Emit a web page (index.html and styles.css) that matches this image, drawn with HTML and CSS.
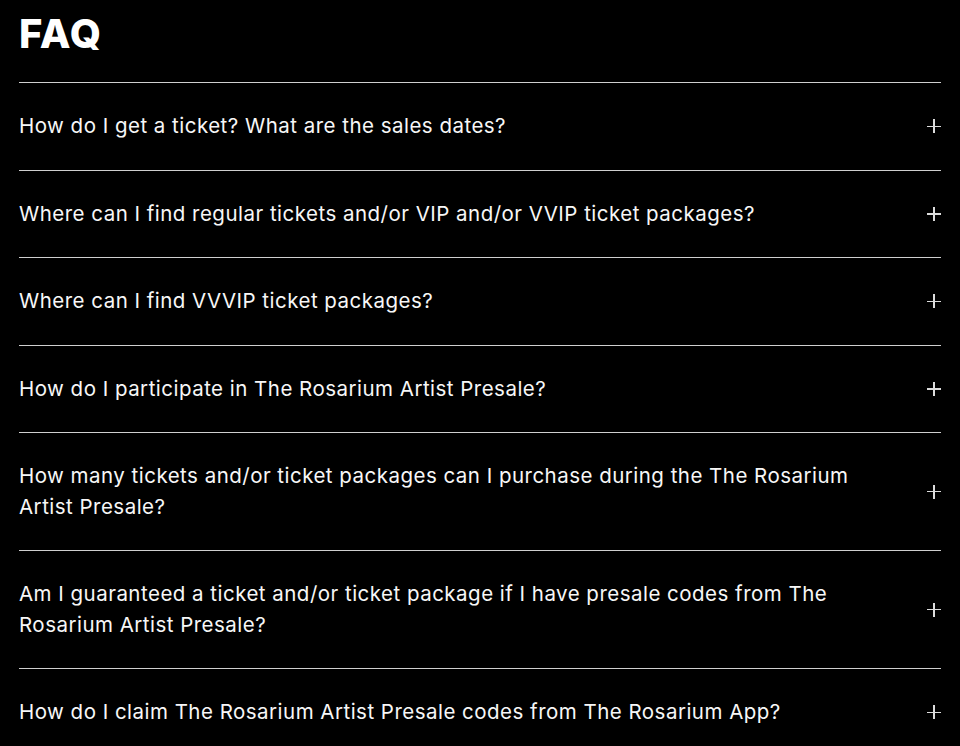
FILE: index.html
```html
<!DOCTYPE html>
<html lang="en">
<head>
<meta charset="utf-8">
<title>FAQ</title>
<link rel="stylesheet" href="styles.css">
</head>
<body>
<section class="faq">
  <h2 class="faq-title">FAQ</h2>
  <ul class="faq-list">
    <li class="faq-item"><span class="faq-q">How do I get a ticket? What are the sales dates?</span><span class="faq-icon"></span></li>
    <li class="faq-item"><span class="faq-q">Where can I find regular tickets and/or VIP and/or VVIP ticket packages?</span><span class="faq-icon"></span></li>
    <li class="faq-item"><span class="faq-q">Where can I find VVVIP ticket packages?</span><span class="faq-icon"></span></li>
    <li class="faq-item"><span class="faq-q">How do I participate in The Rosarium Artist Presale?</span><span class="faq-icon"></span></li>
    <li class="faq-item"><span class="faq-q">How many tickets and/or ticket packages can I purchase during the The Rosarium Artist Presale?</span><span class="faq-icon"></span></li>
    <li class="faq-item"><span class="faq-q">Am I guaranteed a ticket and/or ticket package if I have presale codes from The Rosarium Artist Presale?</span><span class="faq-icon"></span></li>
    <li class="faq-item"><span class="faq-q">How do I claim The Rosarium Artist Presale codes from The Rosarium App?</span><span class="faq-icon"></span></li>
  </ul>
</section>
</body>
</html>
```
FILE: styles.css
```css
html, body {
  margin: 0;
  padding: 0;
  background: #000;
}
body {
  color: #fff;
  font-family: "Inter", "Liberation Sans", sans-serif;
  overflow: hidden;
}
.faq {
  padding: 10px 19px 0;
}
.faq-title {
  margin: 0 0 24px;
  font-size: 40px;
  line-height: 48px;
  font-weight: 800;
  letter-spacing: 1px;
}
.faq-list {
  list-style: none;
  margin: 0;
  padding: 0;
}
.faq-item {
  display: flex;
  align-items: center;
  justify-content: space-between;
  gap: 40px;
  border-top: 1px solid #cfcfcf;
  padding: 28px 0;
}
.faq-q {
  font-size: 20.5px;
  line-height: 30.5px;
  font-weight: 400;
  letter-spacing: 0.48px;
  color: #f7f7f7;
}
.faq-icon {
  position: relative;
  flex: 0 0 14px;
  width: 14px;
  height: 14px;
}
.faq-icon::before,
.faq-icon::after {
  content: "";
  position: absolute;
  background: #dcdcdc;
}
.faq-icon::before {
  left: 0;
  right: 0;
  top: 6.25px;
  height: 1.5px;
}
.faq-icon::after {
  top: 0;
  bottom: 0;
  left: 6.25px;
  width: 1.5px;
}
```
